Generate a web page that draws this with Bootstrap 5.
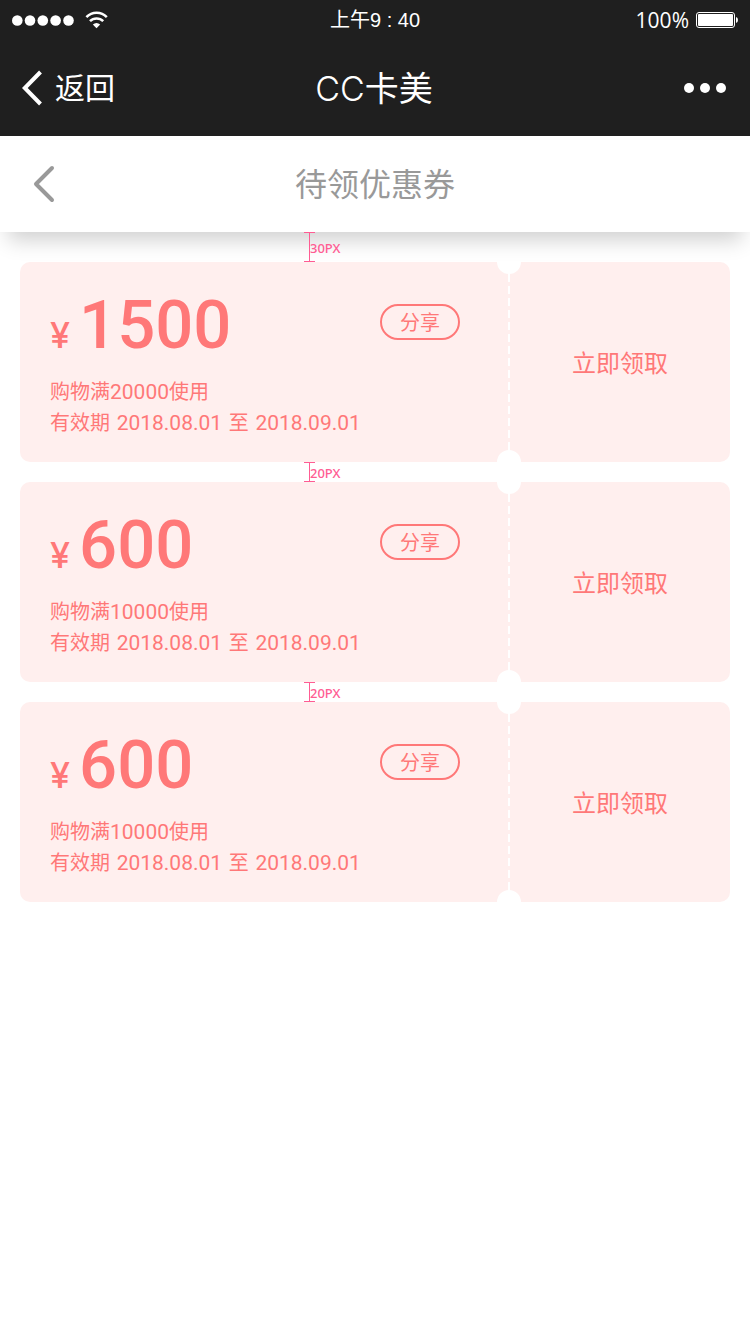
<!DOCTYPE html>
<html lang="zh-CN">
<head>
<meta charset="utf-8">
<meta name="viewport" content="width=device-width, initial-scale=1">
<title>待领优惠券</title>
<link href="https://cdn.jsdelivr.net/npm/bootstrap@5.3.0/dist/css/bootstrap.min.css" rel="stylesheet">
<style>
  body { font-family: Inter, "Noto Sans CJK SC", sans-serif; background: #fff; }
  svg { display: block; }
  .bar-dark { background: #1f1f1f; color: #fff; }
  .trio { display: grid; grid-template-columns: 1fr auto 1fr; align-items: center; }
  .status { height: 40px; padding: 0 12px; font-size: 20px; line-height: 40px; font-family: "Liberation Sans", "Noto Sans CJK SC", sans-serif; }
  .battery-text { font-family: "Open Sans", sans-serif; font-size: 21px; margin-right: 7px; }
  .app-nav { height: 96px; padding: 0 24px 0 22px; }
  .app-nav .back-link { font-size: 30px; gap: 13px; color: #fff; }
  .app-title { font-size: 34px; }
  .app-title span { font-weight: 300; }
  .page-head { height: 96px; padding: 0 33px; color: #999; box-shadow: 0 16px 20px -8px rgba(0,0,0,.19); }
  .page-title { font-size: 32px; font-weight: 400; padding-top: 2px; }
  .plain { background: none; border: 0; padding: 0; color: inherit; }
  .coupon-list { padding: 0 20px; }
  .spacer { height: 20px; padding-left: 284px; color: #ff5c93; font: 500 13px/20px "Noto Sans", sans-serif; }
  .spacer.tall { height: 30px; line-height: 30px; }
  .caliper { width: 11px; margin-right: -5px; border: solid #ff5c93; border-width: 1px 0; background: linear-gradient(#ff5c93, #ff5c93) center / 1px 100% no-repeat; }
  .spacer span { padding-top: 1px; }
  .coupon { background: #ffefee; color: #ff7878; border-radius: 10px; overflow: hidden; }
  .coupon-info { padding: 26px 48px 23px 30px; }
  .price { padding-top: 6px; font-family: Roboto, sans-serif; font-size: 67px; font-weight: 500; line-height: 62px; gap: 9px; }
  .price small { font-family: Inter, sans-serif; font-size: 36px; line-height: 36px; }
  .share { width: 80px; height: 36px; border: 2px solid #ff7878; border-radius: 18px; background: none; color: inherit; font-size: 20px; line-height: 30px; padding: 1px 0 0; }
  .terms { margin-top: 21px; font-size: 20px; line-height: 31px; }
  .terms > div { height: 31px; }
  .terms b, .terms time { font-family: Roboto, sans-serif; font-size: 21px; font-weight: 400; }
  .terms time { margin: 0 1px; }
  .claim { width: 220px; font-size: 24px; padding-top: 3px; }
  .tear { width: 2px; background: repeating-linear-gradient(#fff 0 8px, transparent 8px 12px); }
  .tear::before, .tear::after { content: ""; position: absolute; left: -11px; width: 24px; height: 24px; border-radius: 50%; background: #fff; }
  .tear::before { top: -12px; }
  .tear::after { bottom: -12px; }
</style>
</head>
<body>
<header class="bar-dark">
  <div class="status trio">
    <div class="d-flex align-items-center">
      <svg width="98" height="20" viewBox="12 10 98 20" class="flex-shrink-0" aria-label="信号">
        <g fill="#fff"><circle cx="17.3" cy="20.5" r="5.3"/><circle cx="30" cy="20.5" r="5.3"/><circle cx="42.8" cy="20.5" r="5.3"/><circle cx="55.6" cy="20.5" r="5.3"/><circle cx="68.5" cy="20.5" r="5.3"/>
        <path d="M96.5 28.2l-3.7-3.8q3.7-3 7.4 0z"/></g>
        <g fill="none" stroke="#fff" stroke-width="2.5"><path d="M86.4 17.1a14.2 14.2 0 0 1 20.4 0M90 21.2a9.2 9.2 0 0 1 13.2 0"/></g>
      </svg>
    </div>
    <div>上午9 : 40</div>
    <div class="d-flex align-items-center justify-content-end">
      <span class="battery-text">100%</span>
      <svg width="42" height="16" viewBox="0 0 42 16" aria-label="电量"><rect x=".5" y=".5" width="38" height="15" rx="2.5" fill="none" stroke="#fff"/><rect x="2" y="2" width="35" height="12" rx="1" fill="#fff"/><path d="M40 5q2 .6 2 3t-2 3z" fill="#fff"/></svg>
    </div>
  </div>
  <nav class="app-nav trio">
    <a href="#" class="back-link d-flex align-items-center text-decoration-none">
      <svg width="20" height="36" viewBox="0 0 20 36" fill="none" stroke="#fff" stroke-width="4"><path d="M18.5 2L2.8 18l15.7 16"/></svg>返回</a>
    <div class="app-title"><span>CC</span>卡美</div>
    <button type="button" class="plain d-flex justify-content-end" aria-label="更多">
      <svg width="42" height="10" viewBox="0 0 42 10" fill="#fff"><circle cx="5" cy="5" r="5"/><circle cx="21" cy="5" r="5"/><circle cx="37" cy="5" r="5"/></svg>
    </button>
  </nav>
</header>
<div class="page-head trio">
  <button type="button" class="plain" aria-label="返回">
    <svg width="22" height="38" viewBox="0 0 22 38" fill="none" stroke="#999" stroke-width="4" stroke-linecap="round" stroke-linejoin="round"><path d="M19 3L3 19l16 16"/></svg>
  </button>
  <h1 class="page-title m-0">待领优惠券</h1>
</div>
<main class="coupon-list">
  <div class="spacer tall d-flex"><i class="caliper"></i><span>30PX</span></div>
  <article class="coupon d-flex">
    <div class="coupon-info flex-grow-1">
      <div class="d-flex justify-content-between align-items-center">
        <div class="price d-flex align-items-baseline"><small>¥</small><span>1500</span></div>
        <button type="button" class="share">分享</button>
      </div>
      <div class="terms"><div>购物满<b>20000</b>使用</div><div>有效期 <time>2018.08.01</time> 至 <time>2018.09.01</time></div></div>
    </div>
    <div class="tear position-relative"></div>
    <button type="button" class="claim plain">立即领取</button>
  </article>
  <div class="spacer d-flex"><i class="caliper"></i><span>20PX</span></div>
  <article class="coupon d-flex">
    <div class="coupon-info flex-grow-1">
      <div class="d-flex justify-content-between align-items-center">
        <div class="price d-flex align-items-baseline"><small>¥</small><span>600</span></div>
        <button type="button" class="share">分享</button>
      </div>
      <div class="terms"><div>购物满<b>10000</b>使用</div><div>有效期 <time>2018.08.01</time> 至 <time>2018.09.01</time></div></div>
    </div>
    <div class="tear position-relative"></div>
    <button type="button" class="claim plain">立即领取</button>
  </article>
  <div class="spacer d-flex"><i class="caliper"></i><span>20PX</span></div>
  <article class="coupon d-flex">
    <div class="coupon-info flex-grow-1">
      <div class="d-flex justify-content-between align-items-center">
        <div class="price d-flex align-items-baseline"><small>¥</small><span>600</span></div>
        <button type="button" class="share">分享</button>
      </div>
      <div class="terms"><div>购物满<b>10000</b>使用</div><div>有效期 <time>2018.08.01</time> 至 <time>2018.09.01</time></div></div>
    </div>
    <div class="tear position-relative"></div>
    <button type="button" class="claim plain">立即领取</button>
  </article>
</main>
<script src="https://cdn.jsdelivr.net/npm/bootstrap@5.3.0/dist/js/bootstrap.bundle.min.js"></script>
</body>
</html>
